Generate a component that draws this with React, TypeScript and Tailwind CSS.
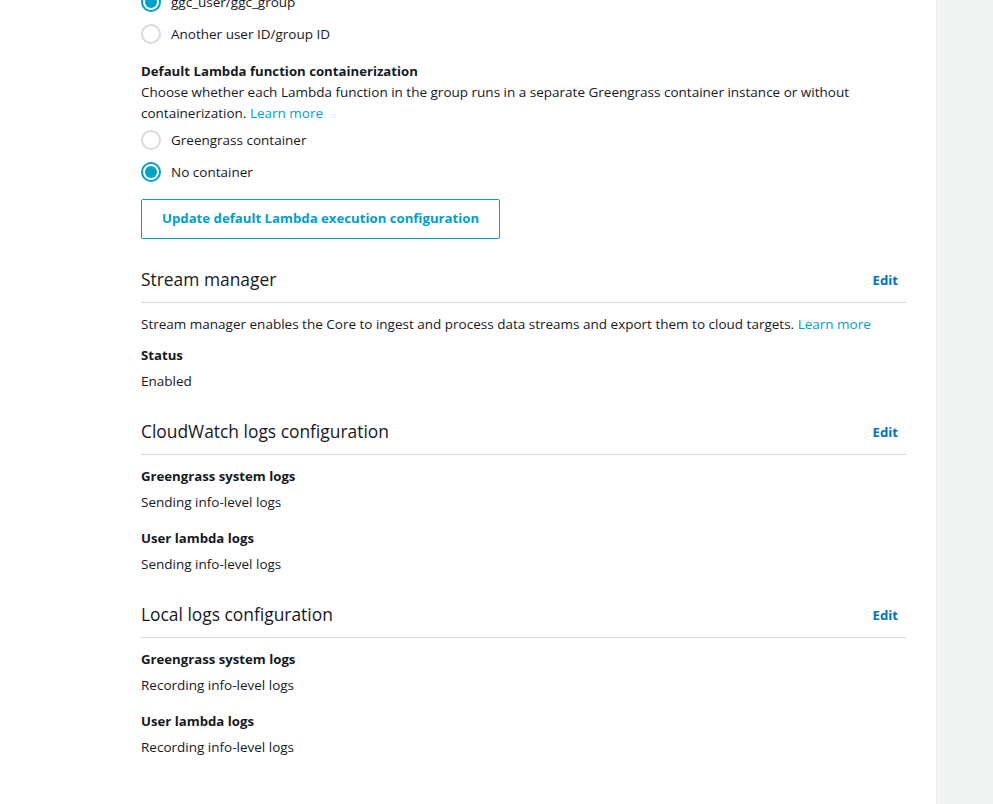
import { ReactNode } from 'react'

const Radio = ({ checked, label }: { checked?: boolean; label: string }) => (
  <div className="flex items-center gap-[10px] h-[32px]">
    {checked ? (
      <span className="w-[20px] h-[20px] rounded-full border-2 border-[#00a1c9] flex items-center justify-center">
        <span className="w-[12px] h-[12px] rounded-full bg-[#00a1c9]" />
      </span>
    ) : (
      <span className="w-[20px] h-[20px] rounded-full border-2 border-[#d5dbdb]" />
    )}
    <span>{label}</span>
  </div>
)

const Section = ({ title, children }: { title: string; children: ReactNode }) => (
  <section className="mt-[24px]">
    <div className="flex items-center justify-between pb-[10px] border-b border-[#d5dbdb]">
      <h2 className="text-[17.4px] leading-[24px] text-[#16191f]">{title}</h2>
      <button className="text-[13.2px] leading-[24px] font-bold text-[#0073bb] mr-[8px] pt-[2px]">Edit</button>
    </div>
    <div className="pt-[8px] flex flex-col gap-[10px]">{children}</div>
  </section>
)

const Field = ({ label, value }: { label: string; value: string }) => (
  <div>
    <div className="font-bold text-[13.2px] leading-[26px]">{label}</div>
    <div className="leading-[26px]">{value}</div>
  </div>
)

export default function App() {
  return (
    <div
      className="flex h-[804px] overflow-hidden bg-white text-[13.5px] text-[#16191f]"
      style={{ fontFamily: '"Open Sans", "Noto Sans", Arial, sans-serif' }}
    >
      <main className="flex-1 pl-[141px] pr-[30px]">
        <div className="-mt-[14px]">
          {/* Run as */}
          <Radio checked label="ggc_user/ggc_group" />
          <Radio label="Another user ID/group ID" />

          {/* Containerization */}
          <div className="mt-[11px]">
            <div className="font-bold text-[13.2px] leading-[21px]">Default Lambda function containerization</div>
            <p className="leading-[21px]">
              Choose whether each Lambda function in the group runs in a separate Greengrass container instance or without
              containerization. <a className="text-[#00a1c9]">Learn more</a>
            </p>
          </div>
          <div>
            <Radio label="Greengrass container" />
            <Radio checked label="No container" />
          </div>
          <button className="mt-[11px] mb-[3px] h-[40px] px-[20px] border border-[#00a1c9] rounded-[2px] font-bold text-[13.2px] text-[#00a1c9]">
            Update default Lambda execution configuration
          </button>

          <Section title="Stream manager">
            <div className="mt-[2px] flex flex-col gap-[7px]">
              <p className="leading-[22px]">
                Stream manager enables the Core to ingest and process data streams and export them to cloud targets.{' '}
                <a className="text-[#00a1c9]">Learn more</a>
              </p>
              <Field label="Status" value="Enabled" />
            </div>
          </Section>

          <Section title="CloudWatch logs configuration">
            <Field label="Greengrass system logs" value="Sending info-level logs" />
            <Field label="User lambda logs" value="Sending info-level logs" />
          </Section>

          <Section title="Local logs configuration">
            <Field label="Greengrass system logs" value="Recording info-level logs" />
            <Field label="User lambda logs" value="Recording info-level logs" />
          </Section>
        </div>
      </main>
      <aside className="w-[57px] shrink-0 bg-[#f2f3f3] border-l border-[#eaeded]" />
    </div>
  )
}
